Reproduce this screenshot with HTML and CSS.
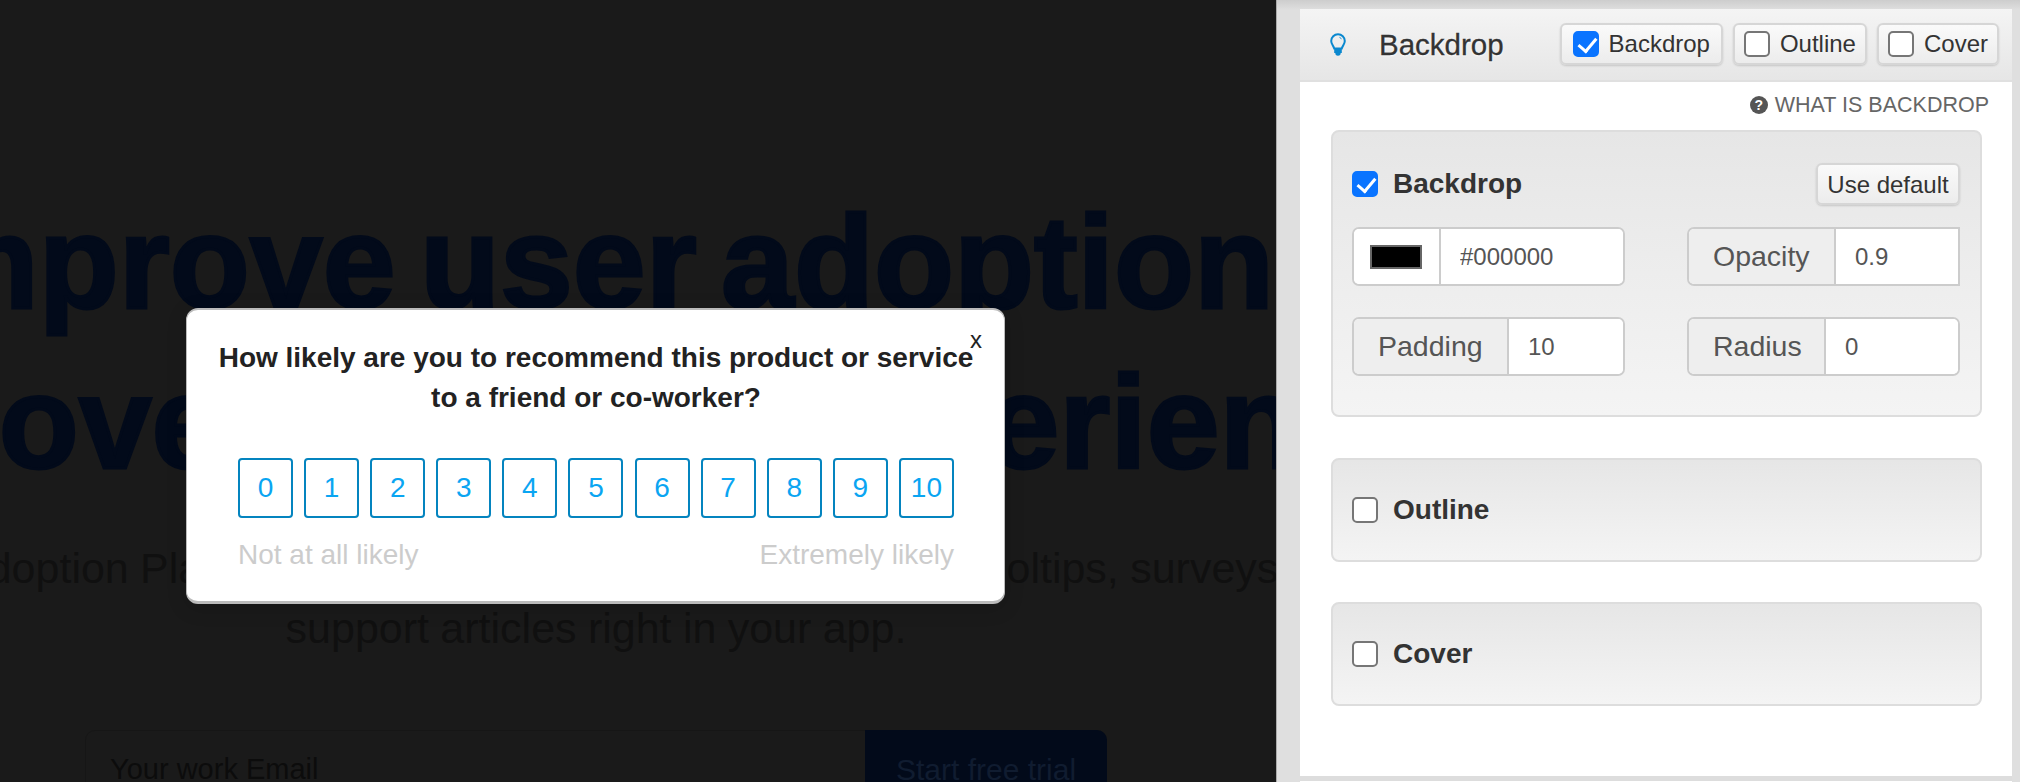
FILE: index.html
```html
<!DOCTYPE html>
<html lang="en">
<head>
    <meta charset="UTF-8">
    <meta name="viewport" content="width=device-width, initial-scale=1.0">
    <title>Backdrop</title>
    <link rel="stylesheet" href="styles.css">
</head>
<body>
    <div class="stage">
        <div class="preview">
            <div class="hero">
                <h1>Improve user adoption<br>improve product experience</h1>
                <p class="hero-sub">Our User Adoption Platform to create interactive product tours, tooltips, surveys and all<br>support articles right in your app.</p>
                <div class="signup">
                    <span class="signup-email">Your work Email</span>
                    <span class="signup-btn">Start free trial</span>
                </div>
            </div>

            <div class="survey">
                <span class="survey-close">x</span>
                <h2>How likely are you to recommend this product or service<br>to a friend or co-worker?</h2>
                <div class="scale">
                    <button class="scale-btn">0</button>
                    <button class="scale-btn">1</button>
                    <button class="scale-btn">2</button>
                    <button class="scale-btn">3</button>
                    <button class="scale-btn">4</button>
                    <button class="scale-btn">5</button>
                    <button class="scale-btn">6</button>
                    <button class="scale-btn">7</button>
                    <button class="scale-btn">8</button>
                    <button class="scale-btn">9</button>
                    <button class="scale-btn">10</button>
                </div>
                <div class="scale-labels">
                    <span>Not at all likely</span>
                    <span>Extremely likely</span>
                </div>
            </div>
        </div>

        <div class="panel">
            <div class="panel-inner">
                <div class="panel-head">
                    <svg class="bulb" viewBox="0 0 16 24" width="16" height="24">
                        <path d="M8 1.200a6.800 6.800 0 0 0-6.800 6.800c0 2.900 2.100 4.400 3 7.400h7.600c.9-3 3-4.500 3-7.400A6.800 6.800 0 0 0 8 1.200z" fill="none" stroke="#0a88cf" stroke-width="2"/>
                        <path d="M4.200 15.500h7.600v4.600H10.700a2.700 2.700 0 0 1-5.400 0H4.200z" fill="#0a88cf"/>
                        <path d="M9.500 4.300l2 1.500" fill="none" stroke="#0a88cf" stroke-width="1"/>
                    </svg>
                    <span class="panel-title">Backdrop</span>
                    <div class="head-toggles">
                        <label class="toggle toggle-main"><input class="cb" type="checkbox" checked>Backdrop</label>
                        <label class="toggle"><input class="cb" type="checkbox">Outline</label>
                        <label class="toggle"><input class="cb" type="checkbox">Cover</label>
                    </div>
                </div>

                <div class="what-is"><span class="help-icon">?</span>WHAT IS BACKDROP</div>

                <div class="card card-open">
                    <div class="card-top">
                        <label class="card-label"><input class="cb" type="checkbox" checked>Backdrop</label>
                        <button class="btn-default">Use default</button>
                    </div>
                    <div class="fields">
                        <div class="group">
                            <span class="addon addon-swatch"><span class="swatch"></span></span>
                            <input class="group-input" type="text" value="#000000">
                        </div>
                        <div class="group group-flat">
                            <span class="addon addon-opacity">Opacity</span>
                            <input class="group-input" type="text" value="0.9">
                        </div>
                        <div class="group">
                            <span class="addon">Padding</span>
                            <input class="group-input" type="text" value="10">
                        </div>
                        <div class="group">
                            <span class="addon addon-radius">Radius</span>
                            <input class="group-input" type="text" value="0">
                        </div>
                    </div>
                </div>

                <div class="card card-closed">
                    <label class="card-label"><input class="cb" type="checkbox">Outline</label>
                </div>
                <div class="card card-closed">
                    <label class="card-label"><input class="cb" type="checkbox">Cover</label>
                </div>
            </div>
            <div class="panel-next"></div>
        </div>
    </div>
</body>
</html>
```

FILE: styles.css
```css
* {
    box-sizing: border-box;
}
body {
    margin: 0;
    font-family: "Liberation Sans", Arial, sans-serif;
    background-color: #1a1a1a;
}
.stage {
    display: flex;
    height: 782px;
    overflow: hidden;
}

/* left side, the dimmed page */
.preview {
    position: relative;
    width: 1276px;
    flex-shrink: 0;
    overflow: hidden;
    background-color: #1a1a1a;
}
.hero {
    width: 1192px;
    padding-top: 183px;
    display: flex;
    flex-direction: column;
    align-items: center;
    text-align: center;
    white-space: nowrap;
}
.hero h1 {
    margin: 0 0 0 -32px;
    font-size: 131px;
    line-height: 160px;
    font-weight: 700;
    word-spacing: -12px;
    color: #020a1a;
    -webkit-text-stroke: 3px #020a1a;
}
.hero-sub {
    margin: 35px 0 0;
    font-size: 43px;
    line-height: 60px;
    word-spacing: -0.6px;
    color: #101010;
}
.signup {
    display: flex;
    flex-shrink: 0;
    width: 1022px;
    height: 90px;
    margin-top: 72px;
    border: 1px solid #161616;
    border-radius: 10px;
    text-align: left;
    font-size: 29px;
}
.signup-email {
    flex: 1;
    padding: 22px 0 0 24px;
    color: #0c0c0c;
}
.signup-btn {
    width: 242px;
    margin: -1px -1px 0 0;
    padding: 23px 0 0 31px;
    background-color: #020a1a;
    border-radius: 0 10px 10px 0;
    color: #101c30;
    font-size: 30px;
}

/* survey popup */
.survey {
    position: absolute;
    left: 186px;
    top: 308px;
    width: 819px;
    height: 296px;
    padding: 28px 50px 0 51px;
    background-color: #fff;
    border: 1px solid #bbb;
    border-top-width: 2px;
    border-bottom-width: 3px;
    border-radius: 12px;
    box-shadow: 0 4px 20px rgba(0, 0, 0, 0.15);
}
.survey h2 {
    margin: 0 -30px;
    font-size: 28px;
    line-height: 40px;
    font-weight: 700;
    color: #222;
    text-align: center;
    white-space: nowrap;
}
.survey-close {
    position: absolute;
    right: 22px;
    top: 18px;
    font-size: 24px;
    line-height: 24px;
    color: #222;
}
.scale {
    display: flex;
    justify-content: space-between;
    margin-top: 40px;
}
.scale-btn {
    width: 55px;
    height: 60px;
    padding: 0;
    background-color: #fff;
    border: 2px solid #0484bf;
    border-radius: 4px;
    color: #0aa5f2;
    font-family: inherit;
    font-size: 28px;
}
.scale-labels {
    display: flex;
    justify-content: space-between;
    margin-top: 17px;
    font-size: 28px;
    line-height: 40px;
    color: #ccc;
}

/* right side, the settings panel */
.panel {
    flex: 1;
    display: flex;
    flex-direction: column;
    padding: 9px 8px 0 23px;
    background: linear-gradient(#cdcdcd, #dfdfdf 10px);
    border-left: 1px solid #aaa;
}
.panel-inner {
    height: 767px;
    flex-shrink: 0;
    background-color: #fff;
}
.panel-next {
    flex: 1;
    background-color: #fff;
    border-top: 5px solid #ddd;
}
.panel-head {
    display: flex;
    align-items: center;
    height: 73px;
    padding: 0 13px 2px 30px;
    background: linear-gradient(#f4f4f4, #e6e6e6);
    border-bottom: 2px solid #e0e0e0;
}
.bulb {
    flex-shrink: 0;
    margin-top: 3px;
}
.panel-title {
    margin: 2px 0 0 33px;
    font-size: 29.500px;
    color: #333;
    -webkit-text-stroke: 0.3px #333;
    text-shadow: 0 1px 2px #fff;
}
.head-toggles {
    display: flex;
    gap: 10px;
    margin-left: auto;
}
.toggle {
    display: flex;
    align-items: center;
    gap: 10px;
    height: 42px;
    padding: 0 9px;
    background: linear-gradient(#fafafa, #ececec);
    border: 2px solid #d6d6d6;
    border-radius: 6px;
    box-shadow: 0 1px 2px rgba(0, 0, 0, 0.15);
    font-size: 24px;
    color: #333;
}
.toggle-main {
    padding: 0 11px;
}
.cb {
    appearance: none;
    flex-shrink: 0;
    display: block;
    width: 26px;
    height: 26px;
    margin: 0;
    background-color: #fff;
    border: 2px solid #767676;
    border-radius: 5px;
}
.cb:checked {
    background-color: #0a74ff;
    border-color: #0a74ff;
}
.cb:checked::after {
    content: "";
    display: block;
    width: 8px;
    height: 15px;
    margin: 1px 0 0 7px;
    border: solid #fff;
    border-width: 0 3px 3px 0;
    transform: rotate(40deg);
}
.what-is {
    display: flex;
    align-items: center;
    justify-content: flex-end;
    gap: 7px;
    height: 48px;
    padding: 0 23px 2px 0;
    font-size: 21.500px;
    color: #666;
}
.help-icon {
    display: block;
    width: 18px;
    height: 18px;
    background-color: #555;
    border-radius: 50%;
    color: #fff;
    font-size: 14px;
    font-weight: 700;
    line-height: 18px;
    text-align: center;
}
.card {
    width: 651px;
    margin-left: 31px;
    background: linear-gradient(#e6e6e6, #f4f4f4);
    border: 2px solid #ddd;
    border-radius: 8px;
}
.card-open {
    height: 287px;
    padding: 31px 20px 0 19px;
}
.card-closed {
    display: flex;
    align-items: center;
    height: 104px;
    margin-top: 40px;
    padding: 0 19px;
}
.card-open + .card-closed {
    margin-top: 41px;
}
.card-top {
    display: flex;
    align-items: center;
    justify-content: space-between;
    height: 42px;
}
.card-label {
    display: flex;
    align-items: center;
    gap: 15px;
    font-size: 28px;
    font-weight: 700;
    color: #333;
}
.btn-default {
    width: 144px;
    height: 42px;
    padding: 2px 0 0;
    background: linear-gradient(#fafafa, #ececec);
    border: 2px solid #d6d6d6;
    border-radius: 6px;
    box-shadow: 0 1px 2px rgba(0, 0, 0, 0.15);
    font-family: inherit;
    font-size: 24px;
    color: #333;
}
.fields {
    display: grid;
    grid-template-columns: 273px 273px;
    column-gap: 62px;
    row-gap: 31px;
    margin-top: 22px;
}
.group {
    display: flex;
    height: 59px;
    background-color: #fff;
    border: 2px solid #ccc;
    border-radius: 7px;
    overflow: hidden;
}
.group-flat {
    border-radius: 7px 0 0 7px;
}
.addon {
    display: flex;
    align-items: center;
    flex-shrink: 0;
    padding: 0 24px;
    width: 155px;
    background-color: #eee;
    border-right: 2px solid #ccc;
    font-size: 28.500px;
    color: #555;
}
.addon-swatch {
    width: 87px;
    padding: 0 16px;
    background-color: #fff;
}
.addon-opacity {
    width: 147px;
}
.addon-radius {
    width: 137px;
}
.swatch {
    display: block;
    width: 52px;
    height: 24px;
    background-color: #000;
    border: 2px solid #666;
}
.group-input {
    flex: 1;
    min-width: 0;
    padding: 0 0 0 19px;
    background: #fff;
    border: none;
    outline: none;
    font-family: inherit;
    font-size: 24px;
    color: #555;
}
```
